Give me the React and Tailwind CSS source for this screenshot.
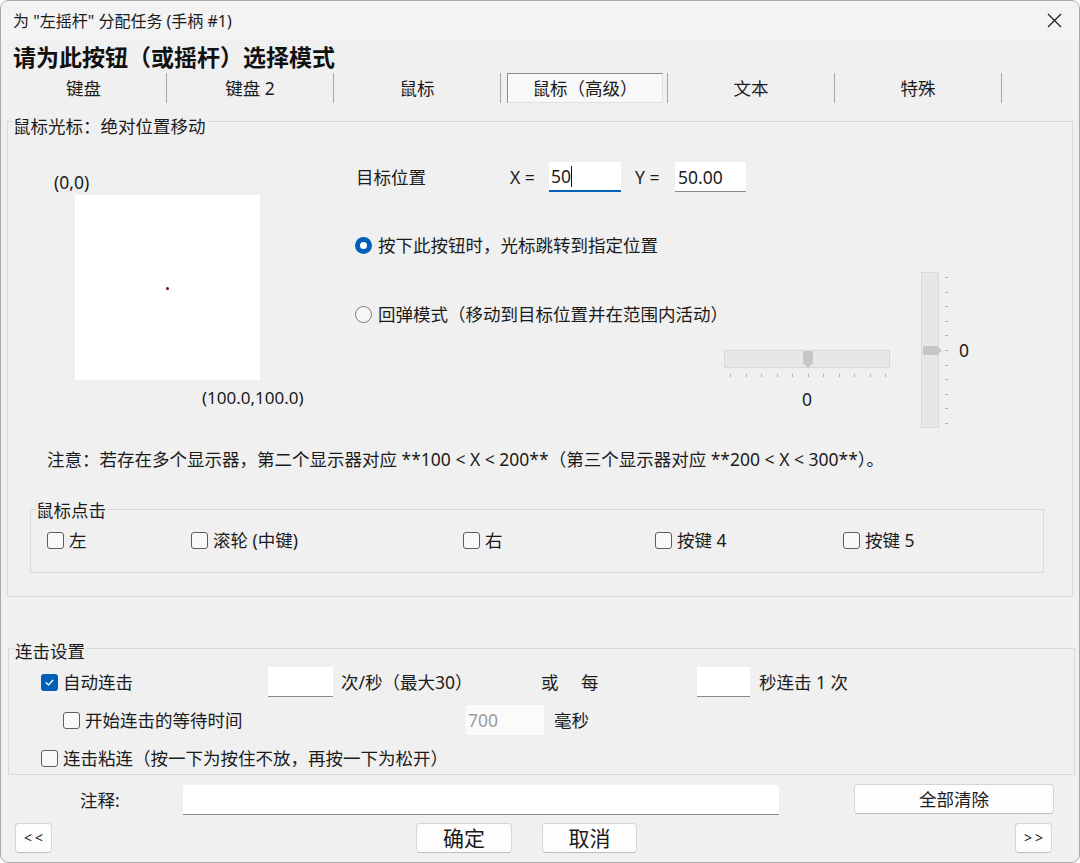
import React from 'react';

const Check = ({ checked }) =>
  checked ? (
    <span className="w-[17px] h-[17px] rounded-[3px] bg-[#005fb8] flex items-center justify-center shrink-0">
      <svg width="11" height="11" viewBox="0 0 11 11">
        <path d="M2.2 5.8 L4.5 8 L8.8 3.2" fill="none" stroke="white" strokeWidth="1.3" strokeLinecap="round" strokeLinejoin="round" />
      </svg>
    </span>
  ) : (
    <span className="w-[17px] h-[17px] rounded-[3px] border border-[#5e5e5e] bg-[#f9f9f9] shrink-0" />
  );

const CheckItem = ({ checked, children }) => (
  <div className="flex items-center gap-[5px] h-[20px]">
    <Check checked={checked} />
    <span className="whitespace-nowrap">{children}</span>
  </div>
);

const Radio = ({ checked }) =>
  checked ? (
    <span className="w-[17px] h-[17px] rounded-full bg-[#005fb8] flex items-center justify-center shrink-0">
      <span className="w-[7px] h-[7px] rounded-full bg-white" />
    </span>
  ) : (
    <span className="w-[17px] h-[17px] rounded-full border border-[#7a7a7a] bg-[#f7f7f7] shrink-0" />
  );

const Btn = ({ className, children }) => (
  <div className={`h-[30px] bg-[#fdfdfd] border border-[#d5d5d5] border-b-[#bcbcbc] rounded-[4px] flex items-center justify-center shrink-0 ${className}`}>
    {children}
  </div>
);

const ticks11 = Array.from({ length: 11 });

export default function App() {
  return (
    <div className="w-[1080px] h-[863px] bg-[#f0f0f0] border border-[#a9a9a9] rounded-[8px] overflow-hidden flex flex-col text-[#1b1b1b] font-['Noto_Sans','Noto_Sans_CJK_SC',sans-serif] text-[17.5px] leading-[20px]">
      {/* Title bar */}
      <div className="h-[39px] shrink-0 bg-[#f3f3f3] flex items-center justify-between pl-[12px] pr-[17px]">
        <span className="text-[16px]">为 "左摇杆" 分配任务 (手柄 #1)</span>
        <svg width="15" height="15" viewBox="0 0 15 15">
          <path d="M1 1 L14 14 M14 1 L1 14" stroke="#1b1b1b" strokeWidth="1.2" />
        </svg>
      </div>

      {/* Header */}
      <div className="h-[33px] shrink-0 pl-[12px] pt-[6px] text-[23px] leading-[22px] font-bold text-[#111]">
        请为此按钮（或摇杆）选择模式
      </div>

      {/* Tabs */}
      <div className="h-[31px] shrink-0 flex">
        <div className="w-[166px] h-[30px] border-r border-[#a8a8a8] flex items-center justify-center">键盘</div>
        <div className="w-[167px] h-[30px] border-r border-[#a8a8a8] flex items-center justify-center">键盘 2</div>
        <div className="w-[167px] h-[30px] border-r border-[#a8a8a8] flex items-center justify-center">鼠标</div>
        <div className="w-[167px] h-[30px] border-r border-[#a8a8a8] pl-[6px] pr-[4px]">
          <div className="h-[30px] w-full border border-[#8d8d8d] border-r-[#e0e0e0] border-b-[#e0e0e0] bg-[#f8f8f8] flex items-center justify-center">
            鼠标（高级）
          </div>
        </div>
        <div className="w-[167px] h-[30px] border-r border-[#a8a8a8] flex items-center justify-center">文本</div>
        <div className="w-[167px] h-[30px] border-r border-[#a8a8a8] flex items-center justify-center">特殊</div>
      </div>

      {/* Group 1 */}
      <div className="relative ml-[6px] mt-[17px] w-[1066px] h-[476px] shrink-0 border border-[#dadada]">
        <span className="absolute left-[5px] top-[-6px] bg-[#f0f0f0] pr-[2px] whitespace-nowrap">鼠标光标：绝对位置移动</span>

        <div className="pt-[38px] pl-[39px] flex">
          {/* Left column */}
          <div className="w-[308px] flex flex-col shrink-0">
            <span className="mt-[12px] ml-[7px] h-[20px]">(0,0)</span>
            <div className="relative ml-[28px] mt-[3px] w-[185px] h-[185px] bg-white">
              <span className="absolute left-[91px] top-[92px] w-[3px] h-[3px] rounded-full bg-[#7a0c0c]" />
            </div>
            <span className="ml-[155px] mt-[8px] h-[20px] text-[17px]">(100.0,100.0)</span>
          </div>

          {/* Column A */}
          <div className="w-[566px] flex flex-col shrink-0">
            <div className="mt-[2px] h-[30px] flex items-center">
              <span className="ml-[1px] w-[154px]">目标位置</span>
              <span className="w-[39px]">X =</span>
              <div className="w-[72px] h-[30px] bg-white border-b-2 border-[#005fb8] flex items-center pl-[2px]">
                <span>50</span>
                <span className="w-px h-[21px] bg-[#111]" />
              </div>
              <span className="ml-[14px] w-[40px]">Y =</span>
              <div className="w-[71px] h-[30px] bg-white border-b border-[#8a8a8a] flex items-center pl-[3px]">50.00</div>
            </div>

            <div className="mt-[43px] h-[20px] flex items-center gap-[6px]">
              <Radio checked />
              <span>按下此按钮时，光标跳转到指定位置</span>
            </div>

            <div className="mt-[49px] h-[20px] flex items-center gap-[6px]">
              <Radio />
              <span>回弹模式（移动到目标位置并在范围内活动）</span>
            </div>

            <div className="mt-[26px] ml-[369px] w-[166px] flex flex-col">
              <div className="relative w-[166px] h-[18px] bg-[#e7e7e7] border border-[#d8d8d8]">
                <svg className="absolute left-[78px] top-0" width="10" height="17" viewBox="0 0 10 17">
                  <path d="M0 1.5 Q0 0 1.5 0 H8.5 Q10 0 10 1.5 V12 L5 17 L0 12 Z" fill="#c6c6c6" />
                </svg>
              </div>
              <div className="ml-[6px] w-[156px] mt-[6px] flex justify-between">
                {ticks11.map((_, i) => (
                  <span key={i} className="w-px h-[3px] bg-[#b5b5b5]" />
                ))}
              </div>
              <span className="mt-[12px] h-[20px] text-center">0</span>
            </div>
          </div>

          {/* Column B */}
          <div className="mt-[112px] flex">
            <div className="relative w-[18px] h-[156px] bg-[#e7e7e7] border border-[#d8d8d8]">
              <svg className="absolute left-[1px] top-[73px]" width="19" height="9" viewBox="0 0 19 9">
                <path d="M0 1.2 Q0 0 1.2 0 H14 L19 4.5 L14 9 H1.2 Q0 9 0 7.8 Z" fill="#c6c6c6" />
              </svg>
            </div>
            <div className="ml-[6px] mt-[5px] h-[147px] flex flex-col justify-between">
              {ticks11.map((_, i) => (
                <span key={i} className="w-[3px] h-px bg-[#b5b5b5]" />
              ))}
            </div>
            <span className="ml-[11px] mt-[68px] h-[20px]">0</span>
          </div>
        </div>

        <div className="mt-[21px] pl-[39px] h-[20px] whitespace-nowrap">
          {"注意：若存在多个显示器，第二个显示器对应 **100 < X < 200**（第三个显示器对应 **200 < X < 300**）。"}
        </div>

        <div className="relative mt-[40px] ml-[22px] w-[1014px] h-[64px] border border-[#dadada]">
          <span className="absolute left-[5px] top-[-10px] bg-[#f0f0f0] pr-[1px]">鼠标点击</span>
          <div className="pt-[20px] pl-[16px] flex">
            <div className="w-[144px]"><CheckItem>左</CheckItem></div>
            <div className="w-[272px]"><CheckItem>滚轮 (中键)</CheckItem></div>
            <div className="w-[192px]"><CheckItem>右</CheckItem></div>
            <div className="w-[188px]"><CheckItem>按键 4</CheckItem></div>
            <div><CheckItem>按键 5</CheckItem></div>
          </div>
        </div>
      </div>

      {/* Group 2 */}
      <div className="relative mt-[51px] ml-[7px] w-[1067px] h-[127px] shrink-0 border border-[#dadada]">
        <span className="absolute left-[6px] top-[-8px] bg-[#f0f0f0] pr-[1px]">连击设置</span>

        <div className="mt-[18px] h-[30px] pl-[32px] flex items-center">
          <div className="w-[227px]"><CheckItem checked>自动连击</CheckItem></div>
          <div className="w-[65px] h-[30px] bg-white border-b border-[#8a8a8a]" />
          <span className="ml-[8px] w-[200px]">次/秒（最大30）</span>
          <span className="w-[40px]">或</span>
          <span className="w-[116px]">每</span>
          <div className="w-[53px] h-[30px] bg-white border-b border-[#8a8a8a]" />
          <span className="ml-[9px]">秒连击 1 次</span>
        </div>

        <div className="mt-[8px] h-[30px] pl-[54px] flex items-center">
          <div className="w-[403px]"><CheckItem>开始连击的等待时间</CheckItem></div>
          <div className="w-[78px] h-[30px] bg-[#fbfbfb] flex items-center pl-[2px] text-[#9b9b9b]">700</div>
          <span className="ml-[10px]">毫秒</span>
        </div>

        <div className="mt-[13px] h-[20px] pl-[32px] flex items-center">
          <CheckItem>连击粘连（按一下为按住不放，再按一下为松开）</CheckItem>
        </div>
      </div>

      {/* Comment row */}
      <div className="mt-[9px] h-[31px] shrink-0 flex items-start">
        <span className="w-[182px] h-[31px] pl-[79px] flex items-center">注释:</span>
        <div className="mt-[1px] w-[596px] h-[30px] bg-white border-b border-[#8a8a8a]" />
        <Btn className="ml-[75px] w-[200px]">全部清除</Btn>
      </div>

      {/* Bottom buttons */}
      <div className="mt-[8px] h-[30px] shrink-0 flex">
        <Btn className="ml-[14px] w-[37px] text-[14px] tracking-[3px] pl-[3px]">&lt;&lt;</Btn>
        <Btn className="ml-[364px] w-[96px] text-[21px]">确定</Btn>
        <Btn className="ml-[30px] w-[95px] text-[21px]">取消</Btn>
        <Btn className="ml-[378px] w-[37px] text-[14px] tracking-[3px] pl-[3px]">&gt;&gt;</Btn>
      </div>
    </div>
  );
}
